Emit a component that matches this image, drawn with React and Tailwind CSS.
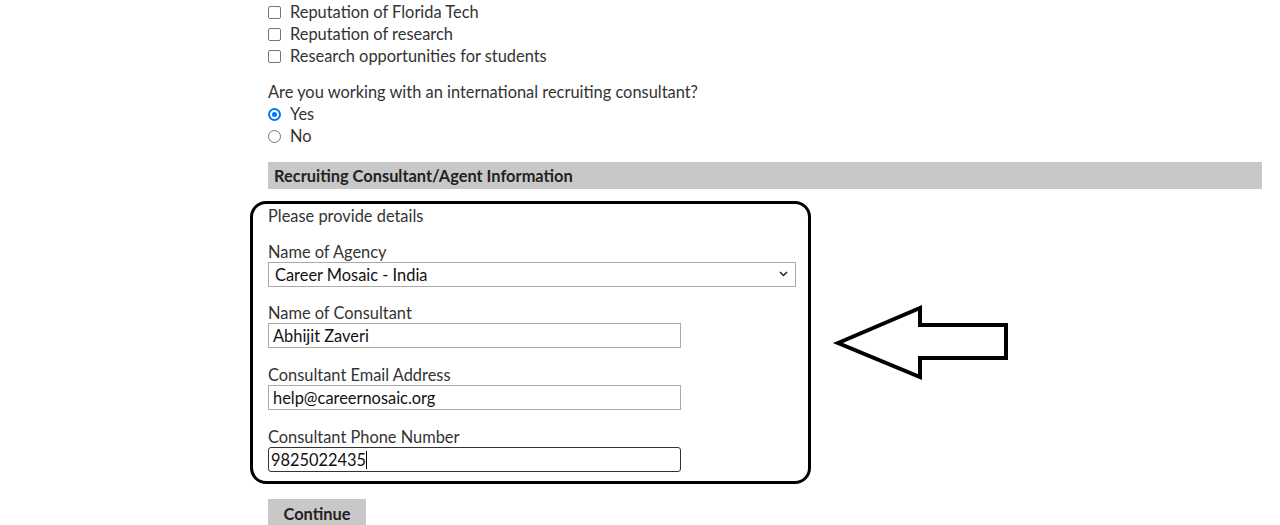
import React from "react";

const font = { fontFamily: "Lato, 'Open Sans', sans-serif" };

function Check({ label }) {
  return (
    <div className="flex items-center h-[22px]">
      <span className="w-[13px] h-[13px] border border-[#767676] rounded-[2px] bg-white shrink-0" />
      <span className="ml-[9px]">{label}</span>
    </div>
  );
}

function Radio({ label, checked }) {
  return (
    <div className="flex items-center h-[22px]">
      {checked ? (
        <span className="w-[13px] h-[13px] rounded-full bg-[#0075ff] flex items-center justify-center shrink-0">
          <span className="w-[9px] h-[9px] rounded-full border-2 border-white bg-[#0075ff]" />
        </span>
      ) : (
        <span className="w-[13px] h-[13px] rounded-full border border-[#767676] bg-white shrink-0" />
      )}
      <span className="ml-[9px]">{label}</span>
    </div>
  );
}

function TextField({ label, value, mt }) {
  return (
    <div className={mt}>
      <div className="h-[22px] leading-[24px]">{label}</div>
      <input
        readOnly
        value={value}
        className="block w-[413px] h-[25px] border border-[#aaaaaa] pl-[4px] text-[16.4px] text-[#111] outline-none bg-white"
        style={font}
      />
    </div>
  );
}

export default function App() {
  return (
    <div className="w-[1280px] h-[525px] overflow-hidden bg-white text-[16.4px] leading-[22px] text-[#333]" style={font}>
      <div className="pl-[268px] pt-px">
        <Check label="Reputation of Florida Tech" />
        <Check label="Reputation of research" />
        <Check label="Research opportunities for students" />

        <div className="mt-[14px] h-[22px]">Are you working with an international recruiting consultant?</div>
        <Radio label="Yes" checked />
        <Radio label="No" />

        <div className="mt-[15px] w-[994px] h-[27px] bg-[#c8c8c8] flex items-center pl-[6px] font-bold text-[#222]">
          Recruiting Consultant/Agent Information
        </div>

        <div className="flex items-center mt-[12px]">
          <div className="ml-[-18px] w-[561px] border-[3px] border-black rounded-[16px] pl-[15px] pt-px pb-[9px]">
            <div className="h-[22px]">Please provide details</div>

            <div className="mt-[13px]">
              <div className="h-[22px] leading-[24px]">Name of Agency</div>
              <div className="relative w-[528px] h-[25px]">
                <select
                  className="appearance-none block w-full h-full border border-[#aaaaaa] pl-[6px] text-[16.4px] text-[#111] bg-white outline-none"
                  style={font}
                  defaultValue="cm"
                >
                  <option value="cm">Career Mosaic - India</option>
                </select>
                <svg
                  className="absolute right-[8px] top-[9px] pointer-events-none"
                  width="9"
                  height="6"
                  viewBox="0 0 9 6"
                >
                  <path d="M1 1 L4.5 4.5 L8 1" fill="none" stroke="#222" strokeWidth="1.5" />
                </svg>
              </div>
            </div>

            <TextField mt="mt-[14px]" label="Name of Consultant" value="Abhijit Zaveri" />
            <TextField mt="mt-[15px]" label="Consultant Email Address" value="help@careernosaic.org" />

            <div className="mt-[15px]">
              <div className="h-[22px] leading-[24px]">Consultant Phone Number</div>
              <div className="w-[413px] h-[25px] border border-[#333] rounded-[3px] pl-[2px] flex items-center text-[#111] bg-white">
                <span>9825022435</span>
                <span className="w-px h-[18px] bg-black" />
              </div>
            </div>
          </div>

          <svg className="ml-[13px] shrink-0" width="188" height="85" viewBox="0 0 188 85">
            <polygon
              points="14,43 96,8 96,25 182,25 182,58 96,58 96,77"
              fill="white"
              stroke="black"
              strokeWidth="4"
              strokeLinejoin="miter"
            />
          </svg>
        </div>

        <button
          className="mt-[15px] w-[98px] h-[30px] bg-[#c8c8c8] font-bold text-[#222] text-[16.4px] flex items-center justify-center"
          style={font}
        >
          Continue
        </button>
      </div>
    </div>
  );
}
